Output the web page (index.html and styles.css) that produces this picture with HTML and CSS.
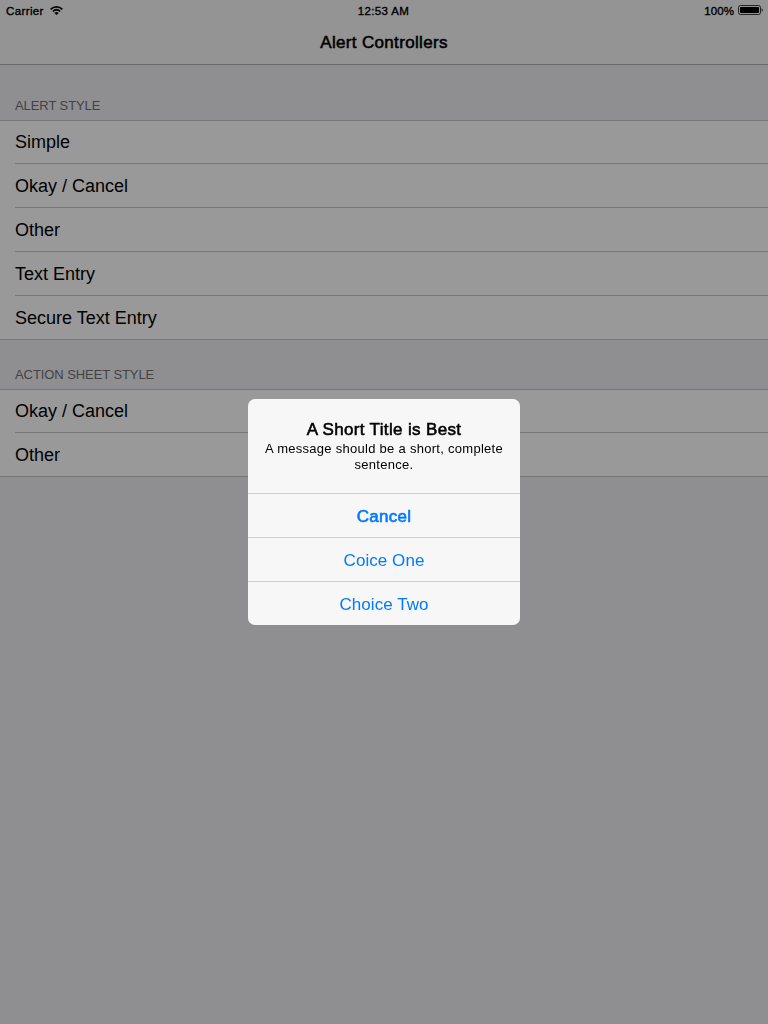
FILE: index.html
```html
<!DOCTYPE html>
<html lang="en">
<head>
<meta charset="utf-8">
<title>Alert Controllers</title>
<link rel="stylesheet" href="styles.css">
</head>
<body>
<header class="bar">
  <div class="status">
    <div class="carrier"><span>Carrier</span>
      <svg class="wifi" width="13" height="9" viewBox="0 0 13 9"><g fill="none" stroke="#060606" stroke-width="1.7"><path d="M.6 3.3C3.9.1 9.1.1 12.4 3.3"/><path d="M2.8 5.5C5 3.4 8 3.4 10.2 5.5"/></g><path d="M4.3 6.9C5.6 5.8 7.4 5.8 8.7 6.9L6.5 9Z" fill="#060606"/></svg>
    </div>
    <div class="time">12:53 AM</div>
    <div class="power"><span>100%</span>
      <svg class="battery" width="25" height="10" viewBox="0 0 25 10"><rect x=".5" y=".5" width="22" height="9" rx="2" fill="none" stroke="#222"/><rect x="2" y="2" width="19" height="6" rx=".7" fill="#000"/><path d="M23.6 3.2Q24.8 3.6 24.8 5T23.6 6.8Z" fill="#222"/></svg>
    </div>
  </div>
  <h1 class="title">Alert Controllers</h1>
</header>
<main>
  <h2 class="label">ALERT STYLE</h2>
  <ul class="group">
    <li>Simple</li><li>Okay / Cancel</li><li>Other</li><li>Text Entry</li><li>Secure Text Entry</li>
  </ul>
  <h2 class="label second">ACTION SHEET STYLE</h2>
  <ul class="group">
    <li>Okay / Cancel</li><li>Other</li>
  </ul>
</main>
<div class="overlay">
  <section class="alert" role="dialog">
    <div class="message">
      <h3>A Short Title is Best</h3>
      <p>A message should be a short, complete sentence.</p>
    </div>
    <button class="cancel">Cancel</button>
    <button>Coice One</button>
    <button>Choice Two</button>
  </section>
</div>
</body>
</html>
```
FILE: styles.css
```css
* { box-sizing: border-box; margin: 0; padding: 0; }
body { height: 1024px; overflow: hidden; background: #8f8f92; color: #000; font-family: "Liberation Sans", Arial, sans-serif; }
.bar { height: 65px; background: #949494; border-bottom: 1px solid #69696c; }
.status { display: grid; grid-template-columns: 1fr auto 1fr; height: 20px; padding: 1px 5px 0 6px; font-size: 11.5px; line-height: 20px; -webkit-text-stroke: .35px #000; }
.carrier, .power { display: flex; align-items: center; }
.carrier { gap: 6px; letter-spacing: .38px; }
.wifi { margin-top: -1px; }
.time { letter-spacing: .35px; margin-left: -2px; }
.power { justify-content: flex-end; gap: 4px; letter-spacing: .1px; }
.battery { margin-top: -2px; -webkit-text-stroke: 0; }
.title { text-align: center; font-size: 17px; font-weight: 400; line-height: 45px; letter-spacing: .33px; -webkit-text-stroke: .55px #000; }
.label { height: 55px; padding: 33px 15px 0; font-size: 13px; font-weight: 400; line-height: 15px; letter-spacing: -.08px; color: #424245; }
.second { height: 49px; padding-top: 27px; }
.group { list-style: none; background: #999; border-top: 1px solid #78777a; border-bottom: 1px solid #78777a; }
.group li { height: 44px; margin-left: 15px; border-bottom: 1px solid #78777a; font-size: 18px; line-height: 45px; }
.group li:first-child { height: 43px; line-height: 42px; }
.group li:last-child { height: 43px; border-bottom: 0; }
.overlay { position: fixed; inset: 0; display: flex; align-items: center; justify-content: center; }
.alert { width: 272px; height: 226px; background: #f7f7f7; border-radius: 7px; overflow: hidden; }
.message { height: 94px; padding: 20px 15px 0; text-align: center; }
.message h3 { font-size: 17px; font-weight: 400; line-height: 21px; letter-spacing: .35px; -webkit-text-stroke: .55px #000; }
.message p { margin: 1px -5px 0; padding: 0 5px; font-size: 13px; line-height: 16px; letter-spacing: .28px; }
.alert button { display: block; width: 100%; height: 44px; border: 0; border-top: 1px solid #d0d0d3; background: none; color: #007aff; padding-top: 2px; font: 17px/41px "Liberation Sans", Arial, sans-serif; letter-spacing: .06px; }
.alert .cancel { letter-spacing: .25px; -webkit-text-stroke: .6px #007aff; }
```
